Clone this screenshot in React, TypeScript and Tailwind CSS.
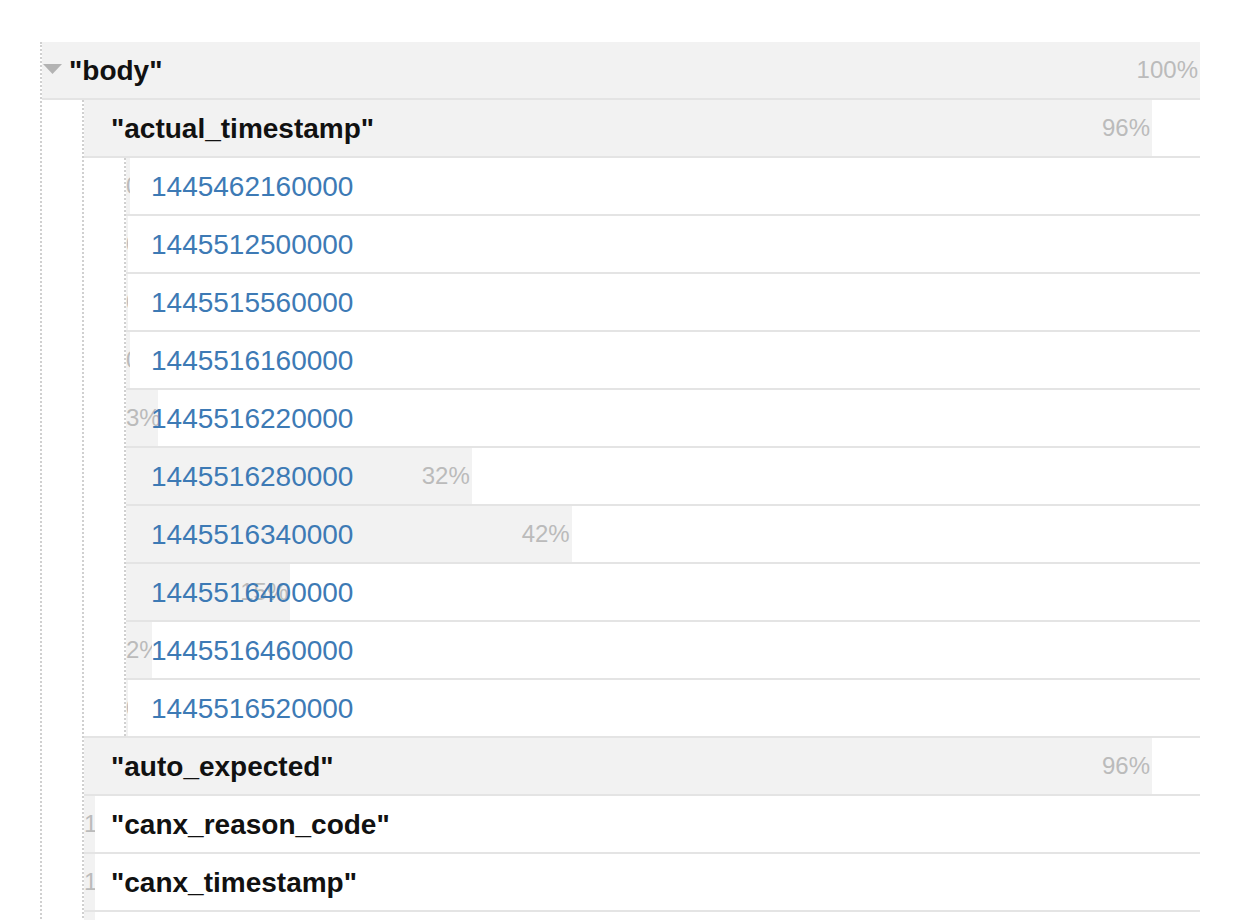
type TreeItem = {
  key: string;
  pct: number;
  label: string;
  value?: boolean;
  children?: TreeItem[];
};

const timestamps: TreeItem[] = [
  { key: "1445462160000", pct: 0.4, label: "0%", value: true },
  { key: "1445512500000", pct: 0.15, label: "0%", value: true },
  { key: "1445515560000", pct: 0.15, label: "0%", value: true },
  { key: "1445516160000", pct: 0.4, label: "0%", value: true },
  { key: "1445516220000", pct: 2.98, label: "3%", value: true },
  { key: "1445516280000", pct: 32.2, label: "32%", value: true },
  { key: "1445516340000", pct: 41.5, label: "42%", value: true },
  { key: "1445516400000", pct: 15.3, label: "15%", value: true },
  { key: "1445516460000", pct: 2.4, label: "2%", value: true },
  { key: "1445516520000", pct: 0.15, label: "0%", value: true },
];

const tree: TreeItem = {
  key: '"body"',
  pct: 100,
  label: "100%",
  children: [
    { key: '"actual_timestamp"', pct: 95.7, label: "96%", children: timestamps },
    { key: '"auto_expected"', pct: 95.7, label: "96%" },
    { key: '"canx_reason_code"', pct: 1, label: "1%" },
    { key: '"canx_timestamp"', pct: 1, label: "1%" },
    { key: '"canx_user"', pct: 1, label: "1%" },
    { key: '"delay"', pct: 96, label: "96%" },
  ],
};

function Row({ item, root }: { item: TreeItem; root?: boolean }) {
  return (
    <div
      className={
        "grid grid-cols-1 grid-rows-1" +
        (item.children ? " h-[58px] border-b-2 border-[#e4e4e4]" : " h-[56px]")
      }
    >
      <div
        className="col-start-1 row-start-1 h-full overflow-hidden whitespace-nowrap bg-[#f2f2f2] pr-[2px] text-right text-[24px] leading-[56px] text-[#bbbbbb]"
        style={{ width: `${item.pct}%` }}
      >
        {item.label}
      </div>
      {root ? (
        <div className="col-start-1 row-start-1 flex items-center pl-px pt-[2px]">
          <svg width="19" height="10" viewBox="0 0 19 10" className="mb-[5px]">
            <path d="M0 0 H19 L9.5 10 Z" fill="#b3b3b3" />
          </svg>
          <span className="ml-[7px] text-[28px] font-bold text-[#111]">{item.key}</span>
        </div>
      ) : (
        <div
          className={
            "col-start-1 row-start-1 flex items-center pt-[2px] " +
            (item.value ? "pl-[25px]" : "pl-[27px]")
          }
        >
          {item.value ? (
            <span className="text-[28px] text-[#3d7ab5]">{item.key}</span>
          ) : (
            <span className="text-[28px] font-bold text-[#111]">{item.key}</span>
          )}
        </div>
      )}
    </div>
  );
}

function TreeNode({ item, last, root }: { item: TreeItem; last: boolean; root?: boolean }) {
  return (
    <div className={last ? "" : "border-b-2 border-[#e4e4e4]"}>
      <Row item={item} root={root} />
      {item.children ? (
        <div className="ml-[40px] border-l-2 border-dotted border-[#d0d0d0]">
          {item.children.map((child, i) => (
            <TreeNode
              key={child.key}
              item={child}
              last={i === item.children!.length - 1}
            />
          ))}
        </div>
      ) : null}
    </div>
  );
}

export default function App() {
  return (
    <div className="h-[920px] overflow-hidden bg-white pt-[42px] font-['Liberation_Sans',Arial,sans-serif]">
      <div className="ml-[40px] w-[1160px] border-l-2 border-dotted border-[#d0d0d0]">
        <TreeNode item={tree} last root />
      </div>
    </div>
  );
}
